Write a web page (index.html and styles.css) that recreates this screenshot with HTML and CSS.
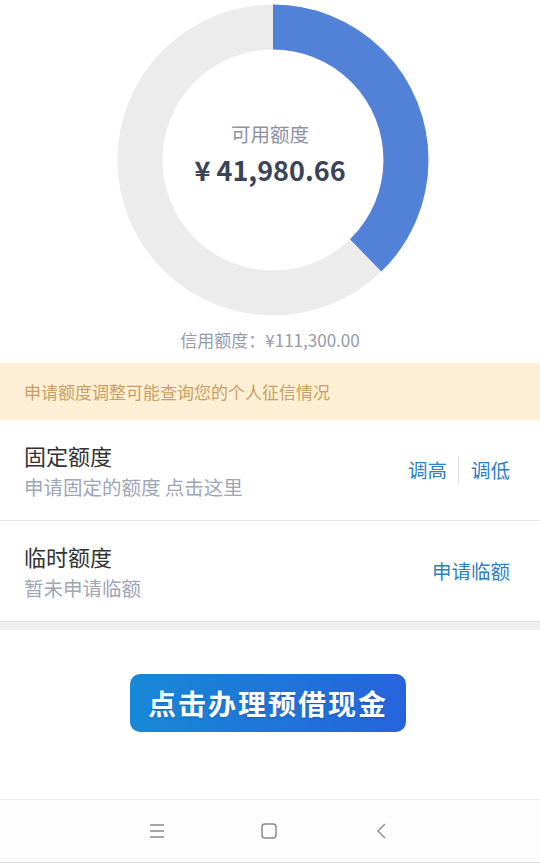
FILE: index.html
```html
<!DOCTYPE html>
<html lang="zh-CN">
<head>
<meta charset="UTF-8">
<meta name="viewport" content="width=device-width, initial-scale=1.0">
<title>额度管理</title>
<link rel="stylesheet" href="styles.css">
</head>
<body>

<!-- 额度环形图 -->
<div class="chart-wrap">
    <div class="chart">
        <svg width="312" height="312" viewBox="0 0 312 312">
            <circle cx="156" cy="156" r="133" fill="none" stroke="#ececec" stroke-width="45"/>
            <circle cx="156" cy="156" r="133" fill="none" stroke="#5282d8" stroke-width="45"
                    stroke-dasharray="315.2 835.7" transform="rotate(-90 156 156)"/>
        </svg>
        <div class="chart-label">
            <span class="chart-title">可用额度</span>
            <span class="chart-amount">¥ 41,980.66</span>
        </div>
    </div>
</div>
<p class="credit-total">信用额度：¥111,300.00</p>

<!-- 提示 -->
<div class="notice">申请额度调整可能查询您的个人征信情况</div>

<!-- 额度列表 -->
<div class="quota-row">
    <div class="quota-info">
        <div class="quota-name">固定额度</div>
        <div class="quota-desc">申请固定的额度 点击这里</div>
    </div>
    <div class="quota-actions">
        <a href="#" class="action">调高</a>
        <a href="#" class="action split">调低</a>
    </div>
</div>
<div class="quota-row">
    <div class="quota-info">
        <div class="quota-name">临时额度</div>
        <div class="quota-desc">暂未申请临额</div>
    </div>
    <div class="quota-actions">
        <a href="#" class="action">申请临额</a>
    </div>
</div>
<div class="gap-band"></div>

<div class="cta">
    <button class="cta-btn">点击办理预借现金</button>
</div>

<!-- 系统导航栏 -->
<div class="nav-bar">
    <svg width="16" height="16" viewBox="0 0 16 16">
        <path d="M1 2h14M1 8h14M1 14h14" stroke="#8a8a8a" stroke-width="1.4" fill="none"/>
    </svg>
    <svg width="16" height="16" viewBox="0 0 16 16">
        <rect x="1" y="1" width="14" height="14" rx="3" stroke="#8a8a8a" stroke-width="1.5" fill="none"/>
    </svg>
    <svg width="16" height="16" viewBox="0 0 16 16">
        <path d="M12 1L5 8l7 7" stroke="#8a8a8a" stroke-width="1.4" fill="none"/>
    </svg>
</div>

</body>
</html>
```

FILE: styles.css
```css
body {
    margin: 0;
    height: 865px;
    display: flex;
    flex-direction: column;
    font-family: "Noto Sans CJK SC", "Noto Sans", sans-serif;
    background: #fff;
}

/* 环形图 */
.chart-wrap {
    display: flex;
    justify-content: center;
    padding: 4px 0 0 5px;
}

.chart {
    position: relative;
    width: 312px;
    height: 312px;
}

.chart svg {
    display: block;
}

.chart-label {
    position: absolute;
    inset: 0;
    display: flex;
    flex-direction: column;
    align-items: center;
    justify-content: center;
    padding: 0 5px 10px 0;
}

.chart-title {
    font-size: 19.5px;
    line-height: 26px;
    color: #8d93a3;
}

.chart-amount {
    margin-top: 4px;
    font-size: 27px;
    line-height: 38px;
    font-weight: 700;
    color: #3b4356;
}

.credit-total {
    margin: 13px 0 12px;
    text-align: center;
    font-size: 17px;
    line-height: 22px;
    color: #959bab;
}

/* 提示条 */
.notice {
    height: 57px;
    display: flex;
    align-items: center;
    padding-left: 24px;
    background: #fdefd5;
    color: #c9a063;
    font-size: 17px;
}

/* 额度行 */
.quota-row {
    display: flex;
    align-items: center;
    justify-content: space-between;
    padding: 20px 30px 20px 24px;
    border-bottom: 1px solid #e6e6e6;
}

.quota-row:last-of-type {
    border-bottom: none;
}

.quota-name {
    font-size: 22px;
    line-height: 30px;
    color: #333;
}

.quota-desc {
    margin-top: 4px;
    font-size: 19.5px;
    line-height: 26px;
    color: #a0a6b6;
}

.quota-actions {
    display: flex;
    align-items: center;
}

.action {
    font-size: 19.5px;
    line-height: 28px;
    color: #2d7fc6;
    text-decoration: none;
}

.action.split {
    margin-left: 11px;
    padding-left: 12px;
    border-left: 1px solid #e2e2e2;
}

.gap-band {
    height: 8px;
    background: #f0f0f0;
}

/* 按钮 */
.cta {
    display: flex;
    justify-content: center;
    padding: 44px 4px 0 0;
}

.cta-btn {
    width: 276px;
    height: 58px;
    border: none;
    border-radius: 10px;
    background: linear-gradient(90deg, #1789d6, #2663dc);
    color: #fff;
    font-family: inherit;
    font-size: 28px;
    font-weight: 700;
    letter-spacing: 2px;
    text-shadow: 0 1px 2px rgba(0, 40, 100, 0.3);
    cursor: pointer;
}

/* 导航栏 */
.nav-bar {
    margin-top: auto;
    margin-bottom: 2px;
    height: 62px;
    display: flex;
    align-items: center;
    justify-content: center;
    gap: 96px;
    background: #fdfdfd;
    border-top: 1px solid #ececec;
    border-bottom: 1px solid #dcdcdc;
    padding-right: 2px;
}
```
